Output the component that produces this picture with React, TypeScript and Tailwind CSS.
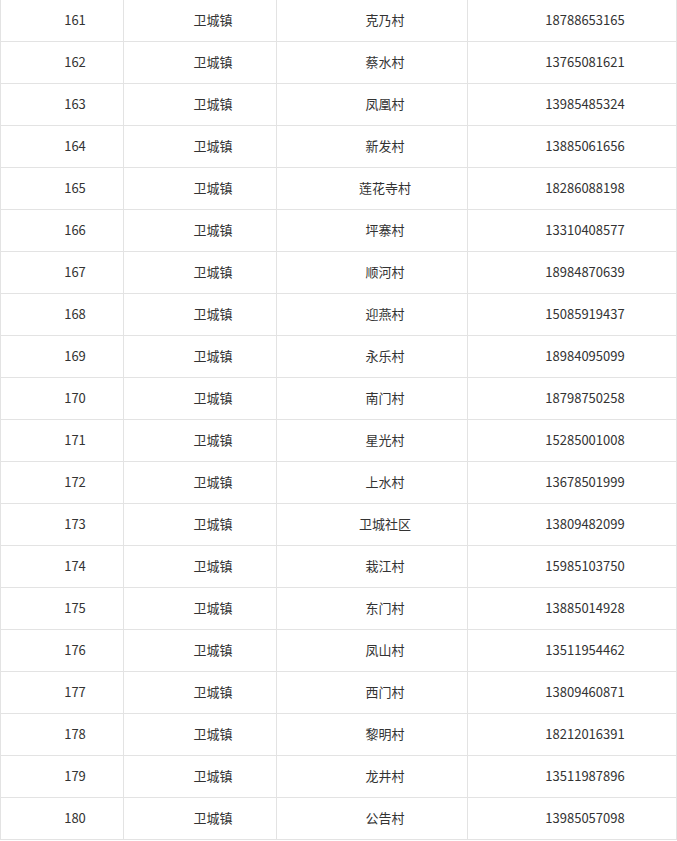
import React from "react";

const rows: [string, string, string, string][] = [
  ["161", "卫城镇", "克乃村", "18788653165"],
  ["162", "卫城镇", "蔡水村", "13765081621"],
  ["163", "卫城镇", "凤凰村", "13985485324"],
  ["164", "卫城镇", "新发村", "13885061656"],
  ["165", "卫城镇", "莲花寺村", "18286088198"],
  ["166", "卫城镇", "坪寨村", "13310408577"],
  ["167", "卫城镇", "顺河村", "18984870639"],
  ["168", "卫城镇", "迎燕村", "15085919437"],
  ["169", "卫城镇", "永乐村", "18984095099"],
  ["170", "卫城镇", "南门村", "18798750258"],
  ["171", "卫城镇", "星光村", "15285001008"],
  ["172", "卫城镇", "上水村", "13678501999"],
  ["173", "卫城镇", "卫城社区", "13809482099"],
  ["174", "卫城镇", "栽江村", "15985103750"],
  ["175", "卫城镇", "东门村", "13885014928"],
  ["176", "卫城镇", "凤山村", "13511954462"],
  ["177", "卫城镇", "西门村", "13809460871"],
  ["178", "卫城镇", "黎明村", "18212016391"],
  ["179", "卫城镇", "龙井村", "13511987896"],
  ["180", "卫城镇", "公告村", "13985057098"],
];

const cell =
  "flex items-center justify-center border-r border-[#e3e3e3] pl-[26px] pb-[2px] h-full";

export default function App() {
  return (
    <div
      className="w-[677px] bg-white text-[13px] text-[#333333] overflow-hidden h-[841px]"
      style={{ fontFamily: '"Noto Sans CJK SC", "Noto Sans", sans-serif' }}
    >
      <div className="-mt-px border-t border-l border-[#e3e3e3]">
        {rows.map((r) => (
          <div key={r[0]} className="flex h-[42px] border-b border-[#e3e3e3]">
            <div className={`${cell} w-[123px]`}>{r[0]}</div>
            <div className={`${cell} w-[153px]`}>{r[1]}</div>
            <div className={`${cell} w-[191px]`}>{r[2]}</div>
            <div className={`${cell} w-[209px]`}>{r[3]}</div>
          </div>
        ))}
      </div>
    </div>
  );
}
